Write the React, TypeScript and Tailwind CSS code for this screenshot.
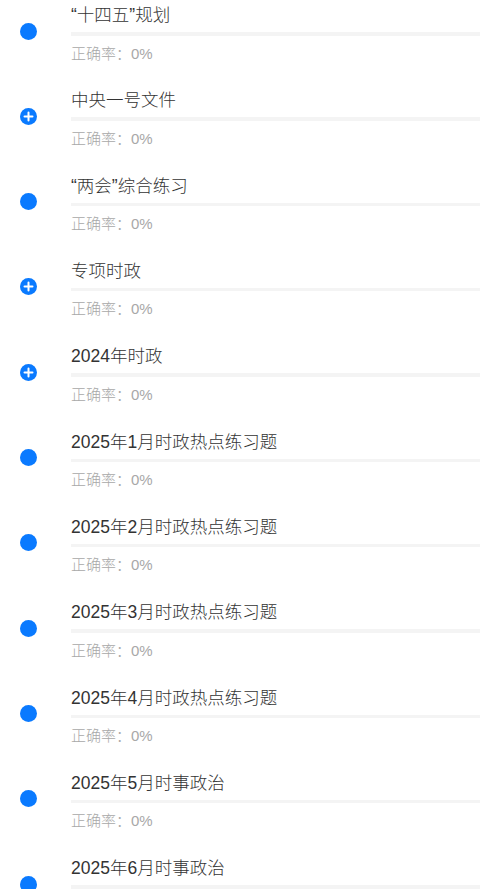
import React from 'react';

type Chapter = { title: string; expandable?: boolean };

const chapters: Chapter[] = [
  { title: '“十四五”规划' },
  { title: '中央一号文件', expandable: true },
  { title: '“两会”综合练习' },
  { title: '专项时政', expandable: true },
  { title: '2024年时政', expandable: true },
  { title: '2025年1月时政热点练习题' },
  { title: '2025年2月时政热点练习题' },
  { title: '2025年3月时政热点练习题' },
  { title: '2025年4月时政热点练习题' },
  { title: '2025年5月时事政治' },
  { title: '2025年6月时事政治' },
];

function PlusDot() {
  return (
    <svg width="17" height="17" viewBox="0 0 17 17">
      <circle cx="8.5" cy="8.5" r="8.5" fill="#0a7aff" />
      <path d="M8.5 4.5v8M4.5 8.5h8" stroke="#fff" strokeWidth="2" strokeLinecap="round" />
    </svg>
  );
}

function ChapterRow({ item }: { item: Chapter }) {
  return (
    <div className="flex h-[85.33px] shrink-0">
      {/* left marker */}
      <div className="w-[71px] shrink-0 flex justify-center pt-[22.5px] pr-[14px]">
        {item.expandable ? (
          <PlusDot />
        ) : (
          <div className="w-[17px] h-[17px] rounded-full bg-[#0a7aff]" />
        )}
      </div>

      {/* title + progress + accuracy */}
      <div className="flex-1 flex flex-col">
        <div className="h-[30px] leading-[30px] text-[17.5px] font-light text-[#333]">{item.title}</div>
        <div className="mt-[2px] h-[3.5px] bg-[#f4f4f4]" />
        <div className="mt-[8px] h-[20px] leading-[20px] text-[15px] font-light text-[#a8a8a8]">正确率：0%</div>
      </div>
    </div>
  );
}

export default function App() {
  return (
    <div
      className="w-[480px] h-[889px] overflow-hidden bg-white flex flex-col"
      style={{ fontFamily: '"Liberation Sans", "Noto Sans CJK SC", sans-serif' }}
    >
      {chapters.map((c, i) => (
        <ChapterRow key={i} item={c} />
      ))}
    </div>
  );
}
